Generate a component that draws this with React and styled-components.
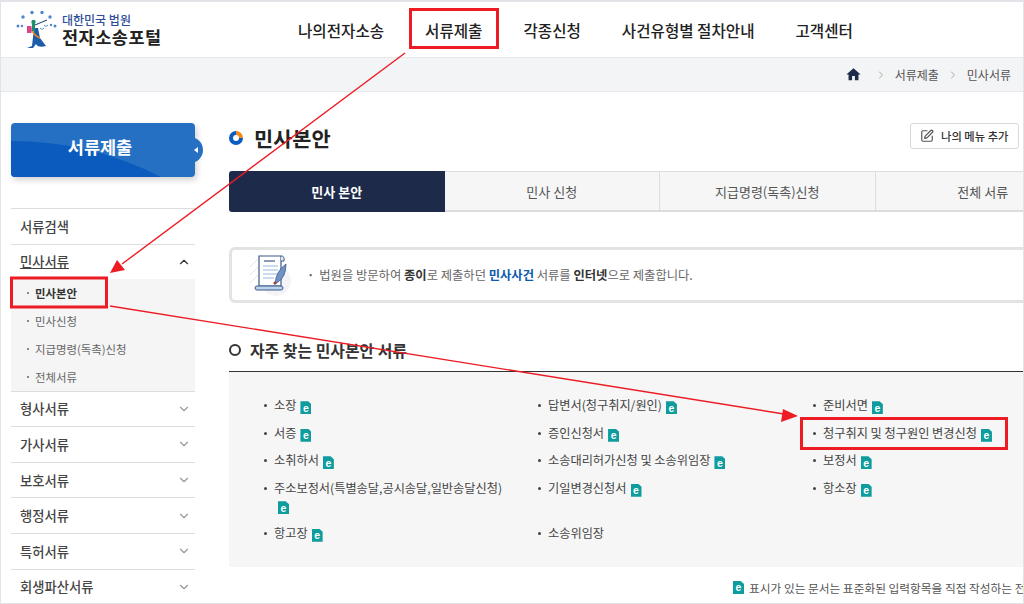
import React from "react";
import styled, { createGlobalStyle } from "styled-components";
import { ChevronDown, ChevronUp, ChevronRight, SquarePen } from "lucide-react";
import { MdHome } from "react-icons/md";

const GlobalStyle = createGlobalStyle`
  html, body {
    margin: 0;
    padding: 0;
    background: #fff;
  }
  * { box-sizing: border-box; }
  body {
    font-family: "Noto Sans CJK KR", "Noto Sans", sans-serif;
    color: #333;
  }
`;

const Page = styled.div`
  position: relative;
  width: 1024px;
  height: 604px;
  overflow: hidden;
  background: #fff;
  border-top: 2px solid #e2e3e6;
  border-left: 1px solid #e2e3e6;
  border-right: 1px solid #e2e3e6;
  border-bottom: 1px solid #e2e3e6;
`;

const Header = styled.header`
  display: flex;
  align-items: center;
  height: 55px;
  padding-left: 15px;
`;

const Logo = styled.div`
  display: flex;
  align-items: center;
  gap: 1px;
  width: 282px;
`;

const LogoText = styled.div`
  display: flex;
  flex-direction: column;
  margin-top: -1px;
`;

const LogoSmall = styled.span`
  font-size: 12px;
  line-height: 15px;
  font-weight: 500;
  color: #2f4f9b;
`;

const LogoBig = styled.span`
  font-size: 17.5px;
  line-height: 19px;
  font-weight: 700;
  color: #222;
  letter-spacing: 0.5px;
`;

const Nav = styled.nav`
  display: flex;
  gap: 41px;
  margin-top: 0;
`;

const NavItem = styled.a`
  font-size: 15.6px;
  font-weight: 500;
  color: #222;
`;

const Crumbs = styled.div`
  display: flex;
  align-items: center;
  justify-content: flex-end;
  height: 35px;
  background: #f3f4f6;
  border-top: 1px solid #e6e8ec;
  border-bottom: 1px solid #e6e8ec;
  font-size: 12px;
  color: #555;
  gap: 8px;
  margin-right: -8px;
`;

const HomeIcon = styled(MdHome)`
  color: #1e2a4a;
  font-size: 17px;
  margin-right: 5px;
`;

const Sep = styled(ChevronRight)`
  color: #aaa;
  width: 12px;
  height: 12px;
  flex: none;
`;

const Body = styled.div`
  display: flex;
`;

const Sidebar = styled.aside`
  flex: none;
  width: 184px;
  margin-left: 10px;
  padding-top: 31px;
`;

const SideTitle = styled.div`
  position: relative;
  display: flex;
  align-items: center;
  justify-content: center;
  height: 54px;
  padding: 0 6px 7px 0;
  border-radius: 4px;
  background: #2670c4;
  color: #fff;
  font-size: 17.5px;
  font-weight: 700;
  box-shadow: 2px 3px 6px rgba(0, 0, 0, 0.18);
  margin-bottom: 31px;
  &::after {
    content: "";
    position: absolute;
    right: -8px;
    top: 14px;
    width: 26px;
    height: 26px;
    border-radius: 50%;
    background: #2670c4;
    clip-path: inset(0 0 0 18px);
  }
`;

const SideWave = styled.svg`
  position: absolute;
  left: 0;
  bottom: 0;
  border-radius: 0 0 4px 4px;
`;

const SideLabel = styled.span`
  position: relative;
`;

const Notch = styled.i`
  position: absolute;
  z-index: 1;
  right: -3px;
  top: 24px;
  border-style: solid;
  border-width: 3px 4px 3px 0;
  border-color: transparent #fff transparent transparent;
`;

const SideList = styled.ul`
  list-style: none;
  margin: 0;
  padding: 0;
  border-top: 1px solid #ddd;
`;

const SideItem = styled.li`
  display: flex;
  align-items: center;
  justify-content: space-between;
  height: ${(p) => (p.$open ? "34px" : "35.6px")};
  padding: 0 4px 0 9px;
  border-bottom: ${(p) => (p.$open ? "none" : "1px solid #ddd")};
  font-size: 13.3px;
  font-weight: 500;
  color: #444;
`;

const SideName = styled.span`
  text-decoration: ${(p) => (p.$open ? "underline" : "none")};
`;

const SubList = styled.ul`
  list-style: none;
  margin: 0;
  padding: 0;
  background: #f5f5f5;
  border-bottom: 1px solid #ddd;
`;

const SubItem = styled.li`
  display: flex;
  align-items: center;
  gap: 6px;
  height: 28px;
  padding-left: 16px;
  font-size: 11.4px;
  font-weight: ${(p) => (p.$active ? 700 : 400)};
  color: ${(p) => (p.$active ? "#333" : "#666")};
  &::before {
    content: "";
    width: 2px;
    height: 2px;
    background: #888;
  }
`;

const Main = styled.main`
  flex: none;
  width: 830px;
  margin-left: 34px;
  padding-top: 31px;
`;

const TitleRow = styled.div`
  display: flex;
  align-items: center;
  justify-content: space-between;
  height: 26px;
  width: 790px;
  margin-bottom: 22px;
`;

const Title = styled.h1`
  display: flex;
  align-items: center;
  gap: 11px;
  margin: 0;
  padding-top: 4px;
  font-size: 20.8px;
  font-weight: 700;
  color: #222;
`;

const Donut = styled.span`
  position: relative;
  width: 14px;
  height: 14px;
  border-radius: 50%;
  background: conic-gradient(#f08a1d 0 25%, #0b5cc0 25% 100%);
  &::after {
    content: "";
    position: absolute;
    inset: 4px;
    border-radius: 50%;
    background: #fff;
  }
`;

const MenuButton = styled.button`
  display: flex;
  align-items: center;
  gap: 7px;
  width: 109px;
  height: 26px;
  padding: 0 0 0 9px;
  background: #fff;
  border: 1px solid #d8d8d8;
  border-radius: 3px;
  font: inherit;
  font-size: 11.3px;
  font-weight: 500;
  color: #333;
  white-space: nowrap;
`;

const Tabs = styled.div`
  display: flex;
  height: 41px;
  margin-bottom: 35px;
`;

const Tab = styled.div`
  flex: none;
  display: flex;
  align-items: center;
  justify-content: center;
  width: 215.5px;
  font-size: 13px;
  background: ${(p) => (p.$active ? "#1e2a4a" : "#f6f6f6")};
  color: ${(p) => (p.$active ? "#fff" : "#555")};
  font-weight: ${(p) => (p.$active ? 700 : 400)};
  border: ${(p) => (p.$active ? "none" : "1px solid #ddd")};
  border-left: none;
  border-radius: ${(p) => (p.$active ? "3px 0 0 3px" : "0")};
  border-top-width: 1px;
  border-bottom-width: 2px;
`;

const InfoBox = styled.div`
  display: flex;
  align-items: center;
  gap: 14px;
  height: 56px;
  padding-left: 16px;
  border: 3px solid #e3e3e3;
  border-radius: 6px;
  margin-bottom: 38px;
  font-size: 12.3px;
  color: #666;
`;

const InfoText = styled.p`
  margin: 0;
  &::before {
    content: "·";
    font-weight: 700;
    margin-right: 5px;
  }
`;

const Strong = styled.b`
  font-weight: 700;
  color: ${(p) => p.$color || "#333"};
`;

const SectionTitle = styled.h2`
  display: flex;
  align-items: center;
  gap: 9px;
  height: 20px;
  margin: 0 0 10px;
  padding-bottom: 2px;
  font-size: 15.9px;
  font-weight: 700;
  color: #333;
  &::before {
    content: "";
    flex: none;
    width: 8px;
    height: 8px;
    border: 2px solid #333;
    border-radius: 50%;
  }
`;

const DocPanel = styled.div`
  display: grid;
  grid-template-columns: 274px 275px 1fr;
  align-content: start;
  height: 196px;
  padding: 25px 0 0 35px;
  background: #f6f6f6;
  border-top: 1px solid #333;
  margin-bottom: 12px;
`;

const Doc = styled.div`
  position: relative;
  padding: 0 35px 10px 10px;
  font-size: 12.2px;
  line-height: 17.5px;
  color: #444;
  &::before {
    content: "";
    position: absolute;
    left: 0;
    top: 7px;
    width: 3px;
    height: 3px;
    border-radius: 50%;
    background: #444;
  }
`;

const EIcon = styled.span`
  display: inline-flex;
  flex: none;
  align-items: center;
  justify-content: center;
  width: 11px;
  height: 13px;
  margin-left: ${(p) => (p.$flush ? "0" : "4px")};
  vertical-align: -1.5px;
  background: #0e9c9e;
  color: #fff;
  font-family: "Liberation Sans", sans-serif;
  font-size: 10.5px;
  font-weight: 700;
  line-height: 1;
  clip-path: polygon(0 0, 70% 0, 100% 24%, 100% 100%, 0 100%);
`;

const Footnote = styled.p`
  display: flex;
  align-items: center;
  gap: 5px;
  margin: 0 0 0 504px;
  font-size: 11.7px;
  color: #555;
  white-space: nowrap;
`;

const Annotations = styled.svg`
  position: absolute;
  left: -1px;
  top: -2px;
  pointer-events: none;
`;

const navItems = ["나의전자소송", "서류제출", "각종신청", "사건유형별 절차안내", "고객센터"];
const tabs = ["민사 본안", "민사 신청", "지급명령(독촉)신청", "전체 서류"];
const subItems = ["민사본안", "민사신청", "지급명령(독촉)신청", "전체서류"];
const closedItems = ["형사서류", "가사서류", "보호서류", "행정서류", "특허서류", "회생파산서류"];
const docs = [
  ["소장", true],
  ["답변서(청구취지/원인)", true],
  ["준비서면", true],
  ["서증", true],
  ["증인신청서", true],
  ["청구취지 및 청구원인 변경신청", true],
  ["소취하서", true],
  ["소송대리허가신청 및 소송위임장", true],
  ["보정서", true],
  ["주소보정서(특별송달,공시송달,일반송달신청)", true],
  ["기일변경신청서", true],
  ["항소장", true],
  ["항고장", true],
  ["소송위임장", false],
];

const LogoMark = () => (
  <svg width="45" height="40" viewBox="0 0 45 40">
    <g fill="#4f86c6">
      <circle cx="2" cy="16" r="1.5" />
      <circle cx="7" cy="7" r="1.7" />
      <circle cx="16" cy="2.5" r="1.7" />
      <circle cx="26" cy="2.5" r="1.7" />
      <circle cx="34" cy="7" r="1.7" />
      <circle cx="39" cy="16" r="1.5" />
      <circle cx="6" cy="16" r="1.2" />
      <circle cx="35" cy="15" r="1.2" />
    </g>
    <path d="M11 38 L16 36 L18 18 L22 18 L24 28 L30 36 Q22 38 20 34 L17 38 Z" fill="#1c5ca8" />
    <path d="M14 17 Q18 26 24 28" stroke="#ef8a1f" strokeWidth="1.8" fill="none" />
    <circle cx="17.5" cy="12" r="2.2" fill="#1b8f6a" />
    <rect x="16" y="14" width="3" height="7" fill="#1b8f6a" />
    <rect x="11" y="16" width="4.5" height="7" fill="#d9468f" />
    <path d="M19 15 L31 10" stroke="#33507f" strokeWidth="1.1" />
    <path d="M24 18 q2 3 4 0 M28 15 q2 3 4 0" stroke="#5c8fc9" fill="none" />
  </svg>
);

const ScrollIcon = () => (
  <svg width="45" height="44" viewBox="0 0 45 44">
    <circle cx="28" cy="28" r="15" fill="#f4f4f6" />
    <path d="M2 14 L14 2 M2 22 L20 4 M2 30 L10 22" stroke="#e6e6ea" strokeWidth="1" />
    <path d="M11 3 H33 V33 H11 Z" fill="#fff" stroke="#3d5a8a" strokeWidth="1.2" />
    <path d="M33 3 q4 0 3 5 h-3" fill="#dfe8f4" stroke="#3d5a8a" />
    <path d="M16 8 H27" stroke="#3d5a8a" strokeWidth="1.2" />
    <path d="M15 13 H30 M15 17 H30 M15 21 H30 M15 25 H26" stroke="#b9cfe8" strokeWidth="1.4" />
    <rect x="7" y="33" width="28" height="4" rx="2" fill="#bcd3ec" stroke="#3d5a8a" />
    <path d="M27 31 Q28 18 38 11 Q38 24 30 29 Z" fill="#6f93c4" stroke="#3d5a8a" strokeWidth="0.8" />
    <circle cx="27" cy="30" r="1.6" fill="#9c4040" />
  </svg>
);

const Overlay = () => (
  <Annotations width="1024" height="604" viewBox="0 0 1024 604">
    <g fill="none" stroke="#ed1c24" strokeWidth="3">
      <rect x="410.5" y="9.5" width="87" height="38" />
      <rect x="11.5" y="278" width="95" height="29" />
      <rect x="801.5" y="418.5" width="205" height="30" />
    </g>
    <g stroke="#ed1c24" strokeWidth="1.4">
      <line x1="405" y1="53" x2="122" y2="264" />
      <line x1="110" y1="306" x2="784" y2="414" />
    </g>
    <g fill="#ed1c24">
      <polygon points="110,273 117,260 125,270" />
      <polygon points="798,416 783,409 781,422" />
    </g>
  </Annotations>
);

export default function App() {
  return (
    <>
      <GlobalStyle />
      <Page>
        <Header>
          <Logo>
            <LogoMark />
            <LogoText>
              <LogoSmall>대한민국 법원</LogoSmall>
              <LogoBig>전자소송포털</LogoBig>
            </LogoText>
          </Logo>
          <Nav>
            {navItems.map((n) => (
              <NavItem key={n}>{n}</NavItem>
            ))}
          </Nav>
        </Header>
        <Crumbs>
          <HomeIcon />
          <Sep />
          <span>서류제출</span>
          <Sep />
          <span>민사서류</span>
          <Sep />
        </Crumbs>
        <Body>
          <Sidebar>
            <SideTitle>
              <SideWave width="184" height="36" viewBox="0 0 184 36">
                <path d="M0 0 Q80 0 150 36 H0 Z" fill="#0a5bbd" />
              </SideWave>
              <SideLabel>서류제출</SideLabel>
              <Notch />
            </SideTitle>
            <SideList>
              <SideItem>서류검색</SideItem>
              <SideItem $open>
                <SideName $open>민사서류</SideName>
                <ChevronUp size={14} color="#333" />
              </SideItem>
              <SubList>
                {subItems.map((s, i) => (
                  <SubItem key={s} $active={i === 0}>
                    {s}
                  </SubItem>
                ))}
              </SubList>
              {closedItems.map((c) => (
                <SideItem key={c}>
                  <SideName>{c}</SideName>
                  <ChevronDown size={14} color="#999" />
                </SideItem>
              ))}
            </SideList>
          </Sidebar>
          <Main>
            <TitleRow>
              <Title>
                <Donut />
                민사본안
              </Title>
              <MenuButton>
                <SquarePen size={14} color="#555" />
                나의 메뉴 추가
              </MenuButton>
            </TitleRow>
            <Tabs>
              {tabs.map((t, i) => (
                <Tab key={t} $active={i === 0}>
                  {t}
                </Tab>
              ))}
            </Tabs>
            <InfoBox>
              <ScrollIcon />
              <InfoText>
                법원을 방문하여 <Strong>종이</Strong>로 제출하던{" "}
                <Strong $color="#0b5cad">민사사건</Strong> 서류를{" "}
                <Strong>인터넷</Strong>으로 제출합니다.
              </InfoText>
            </InfoBox>
            <SectionTitle>자주 찾는 민사본안 서류</SectionTitle>
            <DocPanel>
              {docs.map(([name, hasIcon]) => (
                <Doc key={name}>
                  {name}
                  {hasIcon && <EIcon>e</EIcon>}
                </Doc>
              ))}
            </DocPanel>
            <Footnote>
              <EIcon $flush>e</EIcon>
              표시가 있는 문서는 표준화된 입력항목을 직접 작성하는 전자문서입니다.
            </Footnote>
          </Main>
        </Body>
        <Overlay />
      </Page>
    </>
  );
}
